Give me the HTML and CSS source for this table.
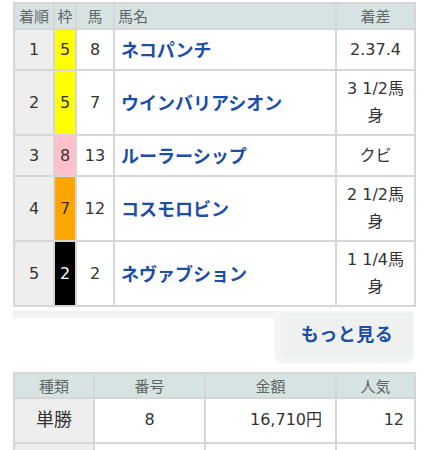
FILE: index.html
```html
<!DOCTYPE html>
<html lang="ja">
<head>
<meta charset="utf-8">
<link rel="stylesheet" href="styles.css">
</head>
<body>
<div class="page">
  <table class="result">
    <colgroup>
      <col class="c-rank"><col class="c-waku"><col class="c-num"><col class="c-name"><col class="c-diff">
    </colgroup>
    <thead>
      <tr><th>着順</th><th>枠</th><th>馬</th><th class="left">馬名</th><th>着差</th></tr>
    </thead>
    <tbody>
      <tr><td class="rank">1</td><td class="waku w5">5</td><td class="num">8</td><td class="name">ネコパンチ</td><td class="diff">2.37.4</td></tr>
      <tr><td class="rank">2</td><td class="waku w5">5</td><td class="num">7</td><td class="name">ウインバリアシオン</td><td class="diff">3 1/2馬身</td></tr>
      <tr><td class="rank">3</td><td class="waku w8">8</td><td class="num">13</td><td class="name">ルーラーシップ</td><td class="diff">クビ</td></tr>
      <tr><td class="rank">4</td><td class="waku w7">7</td><td class="num">12</td><td class="name">コスモロビン</td><td class="diff">2 1/2馬身</td></tr>
      <tr><td class="rank">5</td><td class="waku w2">2</td><td class="num">2</td><td class="name">ネヴァブション</td><td class="diff">1 1/4馬身</td></tr>
    </tbody>
  </table>

  <div class="more-bar">
    <div class="more-tab"><a class="more-btn">もっと見る</a></div>
  </div>

  <table class="payout">
    <colgroup>
      <col class="p-type"><col class="p-num"><col class="p-amt"><col class="p-pop">
    </colgroup>
    <thead>
      <tr><th>種類</th><th>番号</th><th>金額</th><th>人気</th></tr>
    </thead>
    <tbody>
      <tr><td class="type">単勝</td><td class="center">8</td><td class="right">16,710円</td><td class="right">12</td></tr>
      <tr class="below"><td class="type"></td><td></td><td></td><td></td></tr>
    </tbody>
  </table>
</div>
</body>
</html>
```

FILE: styles.css
```css
* { box-sizing: border-box; }
html, body { margin: 0; padding: 0; background: #fff; }
body {
  font-family: "DejaVu Sans", "Noto Sans CJK JP", sans-serif;
  color: #333;
}
.page { padding: 2px 14px 0 13px; }

table {
  width: 401px;
  border-collapse: collapse;
  table-layout: fixed;
}
th, td {
  border: 2px solid #d6d6d6;
  padding: 0;
}
th {
  background: #d7e2e2;
  color: #5f6666;
  font-weight: normal;
  font-family: "Noto Sans CJK JP", sans-serif;
  font-size: 15px;
  line-height: 22px;
  padding: 1px 0 1px;
  text-align: center;
}
th.left { text-align: left; padding-left: 3px; }

.c-rank { width: 40px; }
.c-waku { width: 22px; }
.c-num { width: 38px; }
.c-name { width: 222px; }
.c-diff { width: 79px; }

.result td {
  font-size: 16px;
  line-height: 27px;
  padding: 4px 0 5px;
  text-align: center;
}
.result td.rank { background: #eeeeee; }
.result td.name {
  text-align: left;
  padding-left: 6px;
  color: #1b4ea6;
  font-family: "Noto Sans CJK JP", sans-serif;
  font-weight: bold;
  font-size: 18px;
  line-height: 30px;
}
.result td.diff { padding-left: 5px; padding-right: 5px; }
.w5 { background: #ffff00; }
.w8 { background: #ffc0cb; }
.w7 { background: #ffa500; }
.w2 { background: #000; color: #fff; }

.more-bar {
  margin-top: 4px;
  height: 61px;
  display: flex;
  justify-content: flex-end;
  background: linear-gradient(#f2f2f2 7px, transparent 7px);
}
.more-tab {
  width: 140px;
  height: 52px;
  background: #f5f5f5;
  padding: 2px 1px 5px 7px;
  border-radius: 2px 2px 7px 7px;
}
.more-btn {
  display: flex;
  align-items: center;
  justify-content: center;
  height: 100%;
  padding-bottom: 6px;
  background: #eff1f1;
  border-radius: 4px;
  color: #1b4ea6;
  font-family: "Noto Sans CJK JP", sans-serif;
  font-weight: bold;
  font-size: 18px;
  letter-spacing: 0.5px;
}

.p-type { width: 80px; }
.p-num { width: 111px; }
.p-amt { width: 131px; }
.p-pop { width: 79px; }

.payout th { line-height: 21px; }
.payout td {
  font-size: 16px;
  line-height: 30px;
  padding: 6px 0 7px;
}
.payout td.type {
  background: #eeeeee;
  text-align: center;
  font-size: 18px;
}
.payout td.center { text-align: center; }
.payout td.right { text-align: right; padding-right: 13px; }
.payout td:last-child { padding-right: 10px; }
.payout tr.below td { height: 42px; }
```
